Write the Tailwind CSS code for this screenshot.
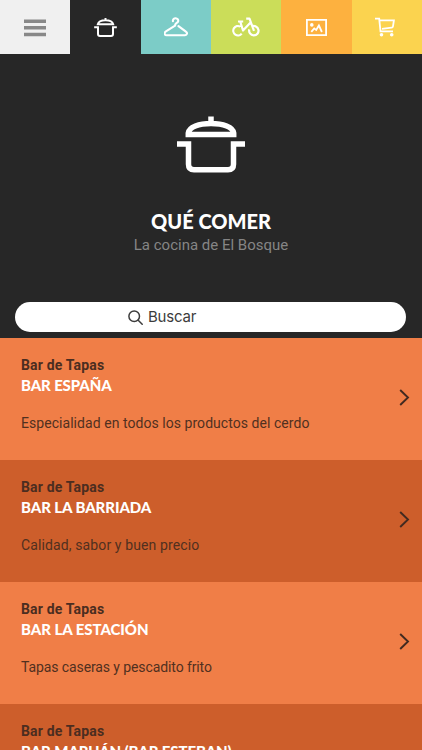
<!DOCTYPE html>
<html lang="es">
<head>
<meta charset="utf-8">
<title>Qué comer</title>
<script src="https://cdn.jsdelivr.net/npm/@tailwindcss/browser@4"></script>
</head>
<body class="h-[750px] overflow-hidden bg-[#272727] font-[Roboto,sans-serif]">
<nav class="grid h-[54px] grid-cols-6">
  <a class="flex items-center justify-center bg-[#f0f0f0]">
    <svg class="mt-0.5 h-[18px] w-[22px]" viewBox="0 0 22 18" fill="#888"><path d="M0 0.500h22v3.500H0zM0 7h22v3.500H0zM0 13.700h22v3.500H0z"/></svg>
  </a>
  <a class="flex items-center justify-center">
    <svg class="h-[19px] w-[23px]" viewBox="0 0 68 57" fill="none" stroke="#fff" stroke-width="6"><path d="M34 0v7M11 18.500C13 10 23 6.500 34 6.500S55 10 57 18.500ZM0 28h11.500v20q0 6 6 6h33q6 0 6-6V28H68"/></svg>
  </a>
  <a class="flex items-center justify-center bg-[#7cccc7]">
    <svg class="h-[20px] w-[24px]" viewBox="0 0 24 20" fill="none" stroke="#fff" stroke-width="2.100" stroke-linecap="round" stroke-linejoin="round"><path d="M8.900 4.200C8.700 2.400 10 1.200 11.700 1.300S14.500 2.800 14.200 4.200C13.800 5.900 11.200 6.100 11.100 8.100M11.100 8.700L1.900 14.400C-0.200 15.900 0.500 18.200 2.600 18.200H21C23.200 18.200 23.700 15.800 21.900 14.600L14.500 9.100"/></svg>
  </a>
  <a class="flex items-center justify-center bg-[#cbdd59]">
    <svg class="-ml-px h-[20px] w-[28px]" viewBox="0 0 28 20" fill="none" stroke="#fff" stroke-width="2.200" stroke-linejoin="round"><path d="M8.300 9.600A4.700 4.700 0 1 0 9.700 16.600M19.700 9.500A4.700 4.700 0 1 1 17.300 12.400M6 4.500h5.200M8.200 4.500l2.800 9L18.800 5.200M14.200 1.700h3.300L22 13.800"/></svg>
  </a>
  <a class="flex items-center justify-center bg-[#fdb13f]">
    <svg class="h-[17px] w-[21px]" viewBox="0 0 21 17" fill="none" stroke="#fff" stroke-width="1.800"><path d="M.9.9h19.200v15.200H.9z"/><circle cx="5.800" cy="5.900" r="1.800" fill="#fff" stroke="none"/><path d="M5.300 12.800l2.900-3.400 2 1.600 2.700-4.500 3 6.500"/></svg>
  </a>
  <a class="flex items-center justify-center bg-[#fbd34f]">
    <svg class="-ml-1 h-[20px] w-[20px]" viewBox="0 0 20 20" fill="none" stroke="#fff" stroke-width="1.800"><path d="M0 1.700h4.200L5.500 14.300H18M4.500 3.400H18.900L18 9.400Q17.800 10.600 16.500 10.700L7 11.800"/><circle cx="6.500" cy="17.700" r="1.800" fill="#fff" stroke="none"/><circle cx="16.700" cy="17.700" r="1.800" fill="#fff" stroke="none"/></svg>
  </a>
</nav>
<header class="flex h-[284px] flex-col items-center pt-[62px]">
  <svg class="h-[57px] w-[68px] shrink-0" viewBox="0 0 68 57" fill="none" stroke="#fff" stroke-width="5.500"><path d="M34 .5v7M11.300 18.400V17C12 11 22 7.500 34 7.500S56 11 56.700 17v1.400ZM0 28h11.500v20.300q0 5.500 5.500 5.500h34q5.500 0 5.500-5.500V28H68"/></svg>
  <h1 class="mt-[34px] h-7 whitespace-nowrap font-[Lato,sans-serif] text-[20px] leading-7 font-black text-white">QUÉ COMER</h1>
  <p class="h-5 whitespace-nowrap text-[15px] leading-5 text-[#858585]">La cocina de El Bosque</p>
  <div class="mt-[47px] mr-px flex h-[30px] w-[391px] shrink-0 items-center rounded-full bg-white pl-[113px] text-[#3c3c3c]">
    <svg class="mr-[5px] h-[15px] w-[15px]" viewBox="0 0 15 15" fill="none" stroke="#3c3c3c" stroke-width="1.500" stroke-linecap="round"><circle cx="6.200" cy="6.200" r="5.300"/><path d="M10.200 10.200l4 4"/></svg>
    <span class="font-[Inter,sans-serif] text-[15px] leading-5 tracking-[-0.2px]">Buscar</span>
  </div>
</header>
<main class="h-[412px] overflow-hidden text-[#51301f]">
  <article class="flex h-[122px] items-center justify-between bg-[#f07e47] pr-3 pl-[21px]">
    <div class="h-[88px] whitespace-nowrap">
      <p class="h-5 text-[14px] leading-5 font-bold tracking-[0.17px] text-[#4b2d20]">Bar de Tapas</p>
      <h2 class="h-5 font-[Lato,sans-serif] text-[15px] leading-5 font-black tracking-[-0.12px] text-white">BAR ESPAÑA</h2>
      <p class="mt-[18px] text-[14px] leading-5 tracking-[0.05px]">Especialidad en todos los productos del cerdo</p>
    </div>
    <svg class="mb-[3px] h-[17px] w-[11px]" viewBox="0 0 11 17" fill="none" stroke="#422a20" stroke-width="1.900"><path d="M1.200 1l7.800 7.500L1.200 16"/></svg>
  </article>
  <article class="flex h-[122px] items-center justify-between bg-[#cd5e2b] pr-3 pl-[21px]">
    <div class="h-[88px] whitespace-nowrap">
      <p class="h-5 text-[14px] leading-5 font-bold tracking-[0.17px] text-[#4b2d20]">Bar de Tapas</p>
      <h2 class="h-5 font-[Lato,sans-serif] text-[15px] leading-5 font-black tracking-[-0.08px] text-white">BAR LA BARRIADA</h2>
      <p class="mt-[18px] text-[14px] leading-5 tracking-[0.12px]">Calidad, sabor y buen precio</p>
    </div>
    <svg class="mb-[3px] h-[17px] w-[11px]" viewBox="0 0 11 17" fill="none" stroke="#422a20" stroke-width="1.900"><path d="M1.200 1l7.800 7.500L1.200 16"/></svg>
  </article>
  <article class="flex h-[122px] items-center justify-between bg-[#f07e47] pr-3 pl-[21px]">
    <div class="h-[88px] whitespace-nowrap">
      <p class="h-5 text-[14px] leading-5 font-bold tracking-[0.17px] text-[#4b2d20]">Bar de Tapas</p>
      <h2 class="h-5 font-[Lato,sans-serif] text-[15px] leading-5 font-black tracking-[-0.05px] text-white">BAR LA ESTACIÓN</h2>
      <p class="mt-[18px] text-[14px] leading-5 tracking-[-0.1px]">Tapas caseras y pescadito frito</p>
    </div>
    <svg class="mb-[3px] h-[17px] w-[11px]" viewBox="0 0 11 17" fill="none" stroke="#422a20" stroke-width="1.900"><path d="M1.200 1l7.800 7.500L1.200 16"/></svg>
  </article>
  <article class="flex h-[122px] items-center bg-[#cd5e2b] pr-3 pl-[21px]">
    <div class="h-[88px] whitespace-nowrap">
      <p class="h-5 text-[14px] leading-5 font-bold tracking-[0.17px] text-[#4b2d20]">Bar de Tapas</p>
      <h2 class="h-5 font-[Lato,sans-serif] text-[15px] leading-5 font-black tracking-[-0.1px] text-white">BAR MARUÁN (BAR ESTEBAN)</h2>
    </div>
  </article>
</main>
</body>
</html>
